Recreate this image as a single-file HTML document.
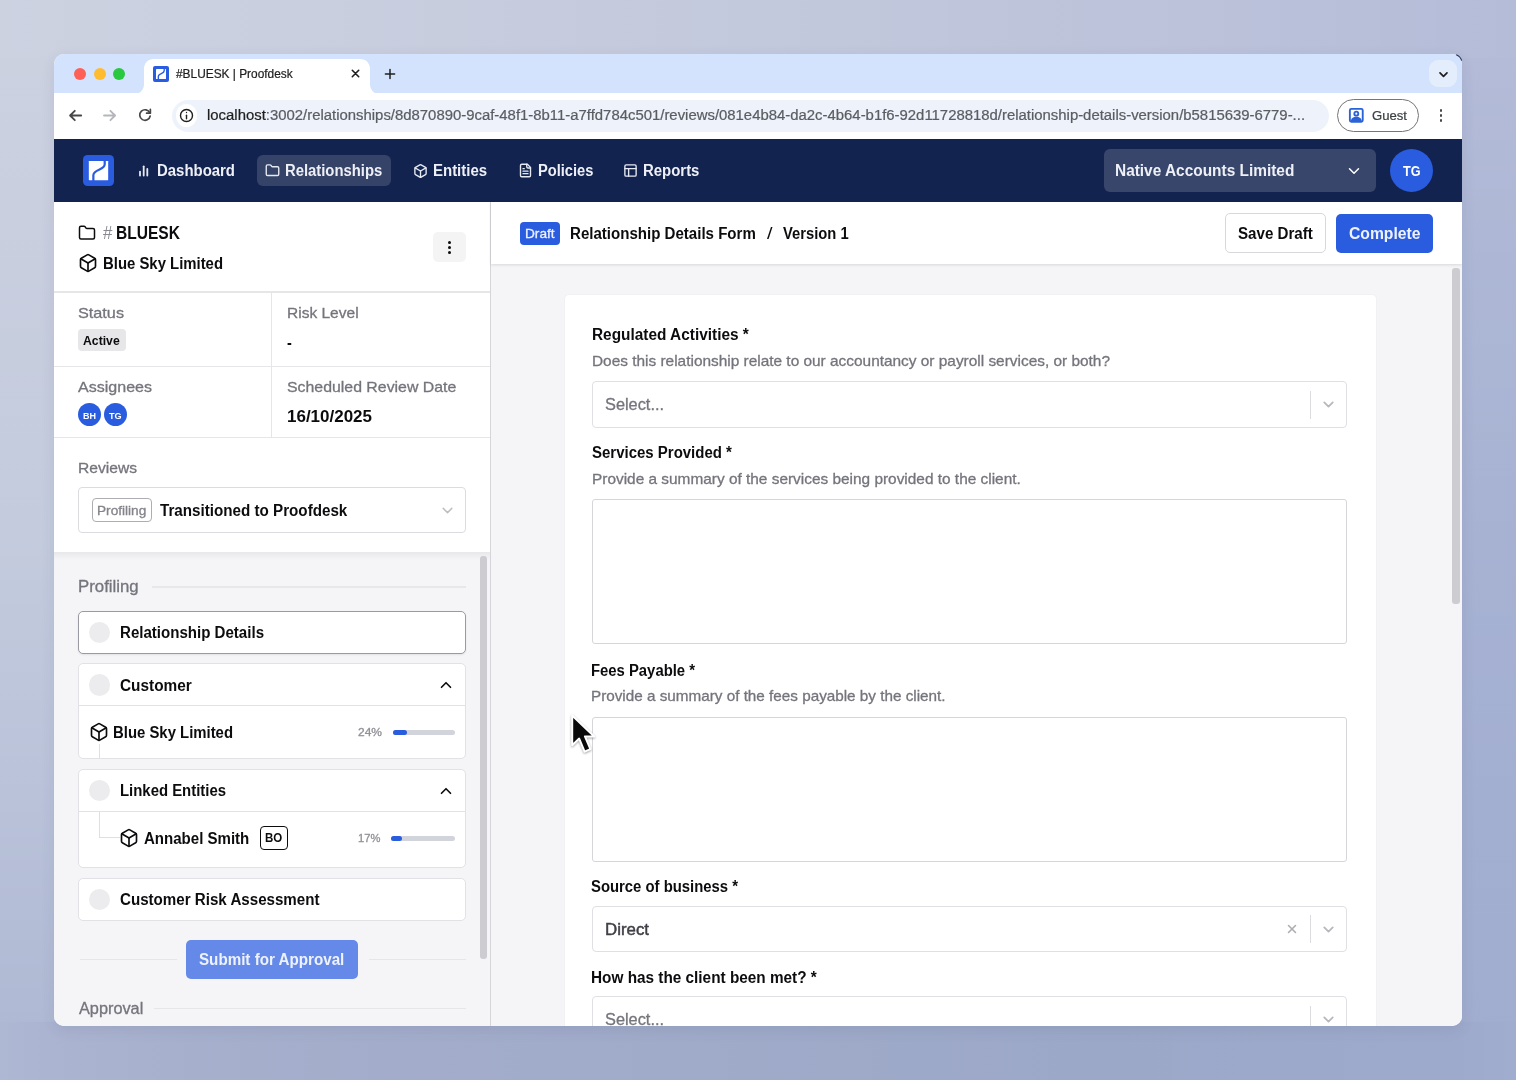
<!DOCTYPE html>
<html><head><meta charset="utf-8"><title>#BLUESK | Proofdesk</title>
<style>
html,body{margin:0;padding:0}
body{width:1516px;height:1080px;overflow:hidden;position:relative;font-family:"Liberation Sans",sans-serif;
background:#b4bcd6;}
.shadow{position:absolute;left:54px;top:54px;width:1408px;height:972px;border-radius:10px;box-shadow:0 4px 14px rgba(50,60,100,.10)}
.win{position:absolute;left:54px;top:54px;width:1408px;height:972px;border-radius:10px;overflow:hidden;background:#fff}
.in{position:absolute;left:-54px;top:-54px;width:1516px;height:1080px;will-change:transform}
.b{position:absolute}
.t{position:absolute;white-space:pre;transform-origin:0 50%;letter-spacing:0}
</style></head><body>
<div class="b" style="left:0;top:0;width:1516px;height:1080px;background:linear-gradient(to bottom right,#ccd2e0 0%,#b6bed8 50%,#a1add0 100%)"></div>
<div class="b" style="left:0;top:0;width:60px;height:1080px;background:linear-gradient(180deg,#ccd2e0 0%,#c8cede 25%,#c3cbdd 50%,#b9c2d9 74%,#b0bad4 93%,#acb6d2 100%)"></div>
<div class="b" style="left:1456px;top:0;width:60px;height:1080px;background:linear-gradient(180deg,#b5bcd8 0%,#adb7d5 25%,#a7b2d3 50%,#a3afd1 74%,#a1adcf 100%)"></div>
<div class="b" style="left:0;top:0;width:1516px;height:58px;background:linear-gradient(90deg,#ccd2e0 0%,#c8cede 25%,#c3c9dc 50%,#bcc3da 75%,#b5bcd8 100%)"></div>
<div class="b" style="left:0;top:1022px;width:1516px;height:58px;background:linear-gradient(90deg,#aeb8d3 0%,#abb4d1 3%,#a6b0cd 13%,#a3adcb 26%,#9faac9 50%,#9ca8c8 73%,#9eaacc 96%,#a1adcf 100%)"></div>
<div class="shadow"></div>
<div class="win"><div class="in">
<div class="b" style="left:54px;top:54px;width:1408px;height:39px;background:#d3e2fd"></div>
<div class="b" style="left:54px;top:93px;width:1408px;height:46px;background:#ffffff"></div>
<svg style="position:absolute;left:134px;top:59px" width="246" height="35" viewBox="0 0 246 35"><path d="M0 35 C6 35 10 31 10 25 V10 C10 4 14 0 20 0 H226 C232 0 236 4 236 10 V25 C236 31 240 35 246 35 Z" fill="#ffffff"/></svg>
<div class="b" style="left:74px;top:68px;width:12px;height:12px;border-radius:50%;background:#fe5f57"></div>
<div class="b" style="left:93.7px;top:68px;width:12.0px;height:12px;border-radius:50%;background:#febc2e"></div>
<div class="b" style="left:113px;top:68px;width:12px;height:12px;border-radius:50%;background:#28c840"></div>
<div class="b" style="left:153px;top:66px;width:16px;height:16px;background:#2a5ce0;border-radius:2px"></div>
<svg style="position:absolute;left:153px;top:66px" width="16" height="16" viewBox="0 0 32 32"><rect x="6" y="6" width="20" height="20" rx="1" fill="#fff"/><path d="M22.4 5 V9.5 C22.4 16 10.7 14.2 10.7 20.8 V27" fill="none" stroke="#2a5ce0" stroke-width="2.8"/></svg>
<svg style="position:absolute;left:349.6px;top:68.2px" width="11" height="11" viewBox="0 0 11 11" fill="none" stroke="#1f1f1f" stroke-width="1.6" stroke-linecap="round" stroke-linejoin="round" ><path d="M2.3 2.3 8.7 8.7M8.7 2.3 2.3 8.7"/></svg>
<svg style="position:absolute;left:384px;top:67.5px" width="12" height="12" viewBox="0 0 12 12" fill="none" stroke="#1f1f1f" stroke-width="1.5" stroke-linecap="round" stroke-linejoin="round" ><path d="M6 1.4V10.6M1.4 6H10.6"/></svg>
<div class="b" style="left:1429px;top:60px;width:28px;height:27px;border-radius:9px;background:#e4edfc"></div>
<svg style="position:absolute;left:1437.5px;top:68.5px" width="11" height="11" viewBox="0 0 11 11" fill="none" stroke="#1f1f1f" stroke-width="1.7" stroke-linecap="round" stroke-linejoin="round" ><path d="M2 3.8 5.5 7.3 9 3.8"/></svg>
<svg style="position:absolute;left:67px;top:107px" width="17" height="17" viewBox="0 0 17 17" fill="none" stroke="#474747" stroke-width="1.8" stroke-linecap="round" stroke-linejoin="round" ><path d="M14.2 8.5H3.2M7.8 3.8 3.1 8.5 7.8 13.2"/></svg>
<svg style="position:absolute;left:101px;top:107px" width="17" height="17" viewBox="0 0 17 17" fill="none" stroke="#b4b6ba" stroke-width="1.8" stroke-linecap="round" stroke-linejoin="round" ><path d="M3 8.5H14M9.4 3.8 14.1 8.5 9.4 13.2"/></svg>
<svg style="position:absolute;left:137.2px;top:107.2px" width="16" height="16" viewBox="0 0 17 17" fill="none" stroke="#474747" stroke-width="1.8" stroke-linecap="round" stroke-linejoin="round" ><path d="M13.6 6.2A5.6 5.6 0 1 0 14 9.6"/><path d="M14.2 2.6V6.6H10.2" /></svg>
<div class="b" style="left:172px;top:99.5px;width:1157px;height:32.19999999999999px;border-radius:16px;background:#eef3fb"></div>
<div class="b" style="left:176px;top:104px;width:21px;height:23px;border-radius:50%;background:#ffffff"></div>
<svg style="position:absolute;left:179px;top:108px" width="15" height="15" viewBox="0 0 15 15" fill="none" stroke="#1f1f1f" stroke-width="1.4" stroke-linecap="round" stroke-linejoin="round" ><circle cx="7.5" cy="7.5" r="6"/><path d="M7.5 7.2V10.8"/><path d="M7.5 4.4V4.6"/></svg>
<div class="b" style="left:1337px;top:98.8px;width:82.40000000000009px;height:32.8px;border-radius:17px;border:1px solid #747775;box-sizing:border-box;background:#fff"></div>
<svg style="position:absolute;left:1348px;top:107.2px" width="16.6" height="16.6" viewBox="0 0 16 16" fill="none" stroke="#2a62d8" stroke-width="1.8" stroke-linecap="round" stroke-linejoin="round" ><rect x="1.8" y="1.8" width="12.4" height="12.4" rx="1.4" fill="none"/><circle cx="8" cy="6.4" r="1.9"/><path d="M3.6 13.2C4.2 11 6 10.3 8 10.3S11.8 11 12.4 13.2Z" fill="#2a62d8"/></svg>
<div class="b" style="left:1439.5px;top:108.85px;width:2.900000000000091px;height:2.9000000000000057px;border-radius:50%;background:#474747"></div>
<div class="b" style="left:1439.5px;top:114.14999999999999px;width:2.900000000000091px;height:2.9000000000000057px;border-radius:50%;background:#474747"></div>
<div class="b" style="left:1439.5px;top:119.45px;width:2.900000000000091px;height:2.9000000000000057px;border-radius:50%;background:#474747"></div>
<div class="b" style="left:54px;top:139px;width:1408px;height:63px;background:#12234f"></div>
<div class="b" style="left:83px;top:154.6px;width:31px;height:31.200000000000017px;background:#2a5ce0;border-radius:4.5px"></div>
<svg style="position:absolute;left:83px;top:154.6px" width="31" height="31.2" viewBox="0 0 32 32"><rect x="6" y="6" width="20" height="20" rx="0.5" fill="#fff"/><path d="M22.4 5 V9.5 C22.4 16 10.7 14.2 10.7 20.8 V27" fill="none" stroke="#2a5ce0" stroke-width="2.3"/></svg>
<div class="b" style="left:257px;top:155px;width:133.5px;height:31px;background:rgba(255,255,255,.15);border-radius:6px"></div>
<div class="b" style="left:1104px;top:149px;width:272px;height:43px;background:rgba(255,255,255,.16);border-radius:6px"></div>
<div class="b" style="left:1390px;top:149px;width:43px;height:43px;background:#2a5ce0;border-radius:50%"></div>
<div class="b" style="left:54px;top:202px;width:436px;height:350px;background:#ffffff"></div>
<div class="b" style="left:54px;top:552px;width:436px;height:474px;background:#f5f5f7"></div>
<div class="b" style="left:54px;top:552px;width:436px;height:8px;background:linear-gradient(#e8e8eb,rgba(245,245,247,0))"></div>
<div class="b" style="left:490px;top:202px;width:1px;height:824px;background:#d6d6da"></div>
<div class="b" style="left:433px;top:232px;width:33px;height:30px;background:#f4f4f5;border-radius:5px"></div>
<div class="b" style="left:447.6px;top:240.60000000000002px;width:3.3999999999999773px;height:3.3999999999999773px;border-radius:50%;background:#0c0c0e"></div>
<div class="b" style="left:447.6px;top:245.8px;width:3.3999999999999773px;height:3.3999999999999773px;border-radius:50%;background:#0c0c0e"></div>
<div class="b" style="left:447.6px;top:251.0px;width:3.3999999999999773px;height:3.3999999999999773px;border-radius:50%;background:#0c0c0e"></div>
<div class="b" style="left:54px;top:291px;width:436px;height:2px;background:#e6e6e9"></div>
<div class="b" style="left:54px;top:365.5px;width:436px;height:1.5px;background:#e6e6e9"></div>
<div class="b" style="left:54px;top:436.7px;width:436px;height:1.5px;background:#e6e6e9"></div>
<div class="b" style="left:270.5px;top:293px;width:1.5px;height:144px;background:#e6e6e9"></div>
<div class="b" style="left:78.3px;top:329px;width:47.7px;height:22px;background:#e7e7e9;border-radius:4px"></div>
<div class="b" style="left:78.2px;top:403.2px;width:23.0px;height:23.0px;background:#2a5ce0;border-radius:50%"></div>
<div class="b" style="left:103.5px;top:403.2px;width:23.0px;height:23.0px;background:#2a5ce0;border-radius:50%"></div>
<div class="b" style="left:78.3px;top:486.7px;width:387.4px;height:46.00000000000006px;background:#fff;border:1px solid #dcdce0;border-radius:4px;box-sizing:border-box"></div>
<div class="b" style="left:91.7px;top:498.3px;width:59.999999999999986px;height:23.400000000000034px;border:1px solid #adadb4;border-radius:4px;box-sizing:border-box"></div>
<div class="b" style="left:480px;top:556px;width:7px;height:403px;background:#cdcdd1;border-radius:3px"></div>
<div class="b" style="left:151.7px;top:586px;width:314.0px;height:1.5px;background:#e7e7ea"></div>
<div class="b" style="left:80px;top:959px;width:96.5px;height:1.2999999999999545px;background:#e6e6e9"></div>
<div class="b" style="left:369px;top:959px;width:97px;height:1.2999999999999545px;background:#e6e6e9"></div>
<div class="b" style="left:154px;top:1008px;width:312px;height:1.2999999999999545px;background:#e6e6e9"></div>
<div class="b" style="left:78.3px;top:611px;width:387.4px;height:43px;background:#fff;border:1px solid #9a9aa2;border-radius:5px;box-sizing:border-box;box-shadow:0 1px 2px rgba(0,0,0,.08)"></div>
<div class="b" style="left:78.3px;top:663.4px;width:387.4px;height:96.0px;background:#fff;border:1px solid #e2e2e6;border-radius:5px;box-sizing:border-box"></div>
<div class="b" style="left:79.3px;top:705px;width:385.4px;height:1px;background:#e2e2e6"></div>
<div class="b" style="left:78.3px;top:769.3px;width:387.4px;height:98.70000000000005px;background:#fff;border:1px solid #e2e2e6;border-radius:5px;box-sizing:border-box"></div>
<div class="b" style="left:79.3px;top:811.3px;width:385.4px;height:1.0px;background:#e2e2e6"></div>
<div class="b" style="left:78.3px;top:878px;width:387.4px;height:42.799999999999955px;background:#fff;border:1px solid #e2e2e6;border-radius:5px;box-sizing:border-box"></div>
<div class="b" style="left:89px;top:621.5999999999999px;width:21.400000000000006px;height:21.40000000000009px;background:#ececee;border-radius:50%"></div>
<div class="b" style="left:89px;top:674.3px;width:21.400000000000006px;height:21.40000000000009px;background:#ececee;border-radius:50%"></div>
<div class="b" style="left:89px;top:780.0px;width:21.400000000000006px;height:21.40000000000009px;background:#ececee;border-radius:50%"></div>
<div class="b" style="left:89px;top:888.8px;width:21.400000000000006px;height:21.40000000000009px;background:#ececee;border-radius:50%"></div>
<div class="b" style="left:98.5px;top:744px;width:1.0px;height:14.399999999999977px;background:#dfdfe3"></div>
<div class="b" style="left:98.5px;top:812.3px;width:1.0px;height:25.700000000000045px;background:#dfdfe3"></div>
<div class="b" style="left:98.5px;top:837px;width:21.0px;height:1px;background:#dfdfe3"></div>
<div class="b" style="left:392.7px;top:729.8px;width:62.30000000000001px;height:5.0px;background:#d2d4dc;border-radius:3px"></div>
<div class="b" style="left:392.7px;top:729.8px;width:14.600000000000023px;height:5.0px;background:#2a5ce0;border-radius:3px"></div>
<div class="b" style="left:390.7px;top:835.8px;width:64.30000000000001px;height:5.0px;background:#d2d4dc;border-radius:3px"></div>
<div class="b" style="left:390.7px;top:835.8px;width:11.0px;height:5.0px;background:#2a5ce0;border-radius:3px"></div>
<div class="b" style="left:260px;top:826.3px;width:27.69999999999999px;height:23.700000000000045px;border:1.3px solid #0c0c0e;border-radius:4px;box-sizing:border-box;background:#fff"></div>
<div class="b" style="left:186.2px;top:940.3px;width:171.5px;height:38.5px;background:#6489e8;border-radius:5px"></div>
<div class="b" style="left:491px;top:202px;width:971px;height:824px;background:#f5f5f7"></div>
<div class="b" style="left:491px;top:202px;width:971px;height:62px;background:#ffffff;box-shadow:0 1px 3px rgba(0,0,0,.12)"></div>
<div class="b" style="left:520.3px;top:222.2px;width:39.700000000000045px;height:22.80000000000001px;background:#2a5ce0;border-radius:4px"></div>
<div class="b" style="left:1225.3px;top:213px;width:100.70000000000005px;height:40.30000000000001px;background:#fff;border:1px solid #d8d8dc;border-radius:5px;box-sizing:border-box"></div>
<div class="b" style="left:1336.3px;top:213.5px;width:96.70000000000005px;height:39.30000000000001px;background:#2a5ce0;border-radius:5px"></div>
<div class="b" style="left:1452px;top:268px;width:7.5px;height:336px;background:#cdcdd1;border-radius:3px"></div>
<div class="b" style="left:565px;top:294.5px;width:811px;height:745.5px;background:#ffffff;border-radius:4px;box-shadow:0 0 2px rgba(0,0,0,.07)"></div>
<div class="b" style="left:591.5px;top:381.2px;width:755.0px;height:46.80000000000001px;background:#fff;border:1px solid #e0e0e4;border-radius:4px;box-sizing:border-box"></div>
<div class="b" style="left:591.5px;top:498.7px;width:755.0px;height:145.59999999999997px;background:#fff;border:1px solid #d6d6da;border-radius:3px;box-sizing:border-box"></div>
<div class="b" style="left:591.5px;top:717px;width:755.0px;height:144.79999999999995px;background:#fff;border:1px solid #d6d6da;border-radius:3px;box-sizing:border-box"></div>
<div class="b" style="left:591.5px;top:906px;width:755.0px;height:46px;background:#fff;border:1px solid #e0e0e4;border-radius:4px;box-sizing:border-box"></div>
<div class="b" style="left:591.5px;top:996px;width:755.0px;height:46px;background:#fff;border:1px solid #e0e0e4;border-radius:4px;box-sizing:border-box"></div>
<div class="b" style="left:1310px;top:390.9px;width:1px;height:28.0px;background:#dcdce0"></div>
<div class="b" style="left:1310px;top:915.3px;width:1px;height:28.0px;background:#dcdce0"></div>
<div class="b" style="left:1310px;top:1005.7px;width:1px;height:28.0px;background:#dcdce0"></div>
<svg style="position:absolute;left:138.2px;top:163.6px" width="11" height="13" viewBox="0 0 11 13" fill="none" stroke="#e6e9f2" stroke-width="1.8" stroke-linecap="round" stroke-linejoin="round" ><path d="M2 11.5V7.7"/><path d="M5.7 11.5V2.3"/><path d="M9.3 11.5V4.9"/></svg>
<svg style="position:absolute;left:265px;top:163px" width="15" height="15" viewBox="0 0 24 24" fill="none" stroke="#e6e9f2" stroke-width="2.2" stroke-linecap="round" stroke-linejoin="round" ><path d="M20 20a2 2 0 0 0 2-2V8a2 2 0 0 0-2-2h-7.9a2 2 0 0 1-1.69-.9L9.6 3.9A2 2 0 0 0 7.93 3H4a2 2 0 0 0-2 2v13a2 2 0 0 0 2 2Z"/></svg>
<svg style="position:absolute;left:413px;top:162.5px" width="15" height="16" viewBox="0 0 24 24" fill="none" stroke="#e6e9f2" stroke-width="2.2" stroke-linecap="round" stroke-linejoin="round" ><path d="M21 8a2 2 0 0 0-1-1.73l-7-4a2 2 0 0 0-2 0l-7 4A2 2 0 0 0 3 8v8a2 2 0 0 0 1 1.73l7 4a2 2 0 0 0 2 0l7-4A2 2 0 0 0 21 16Z"/><path d="m3.3 7 8.7 5 8.7-5"/><path d="M12 22V12"/></svg>
<svg style="position:absolute;left:518px;top:163px" width="15" height="15" viewBox="0 0 24 24" fill="none" stroke="#e6e9f2" stroke-width="2.2" stroke-linecap="round" stroke-linejoin="round" ><path d="M15 2H6a2 2 0 0 0-2 2v16a2 2 0 0 0 2 2h12a2 2 0 0 0 2-2V7Z"/><path d="M14 2v4a2 2 0 0 0 2 2h4"/><path d="M10 9H8"/><path d="M16 13H8"/><path d="M16 17H8"/></svg>
<svg style="position:absolute;left:623px;top:163px" width="15" height="15" viewBox="0 0 24 24" fill="none" stroke="#e6e9f2" stroke-width="2.2" stroke-linecap="round" stroke-linejoin="round" ><rect width="18" height="18" x="3" y="3" rx="2"/><path d="M3 9h18"/><path d="M9 21V9"/></svg>
<svg style="position:absolute;left:1345px;top:162px" width="18" height="18" viewBox="0 0 24 24" fill="none" stroke="#ffffff" stroke-width="2" stroke-linecap="round" stroke-linejoin="round" ><path d="m6 9 6 6 6-6"/></svg>
<svg style="position:absolute;left:78.1px;top:223.9px" width="18" height="18" viewBox="0 0 24 24" fill="none" stroke="#0c0c0e" stroke-width="2" stroke-linecap="round" stroke-linejoin="round" ><path d="M20 20a2 2 0 0 0 2-2V8a2 2 0 0 0-2-2h-7.9a2 2 0 0 1-1.69-.9L9.6 3.9A2 2 0 0 0 7.93 3H4a2 2 0 0 0-2 2v13a2 2 0 0 0 2 2Z"/></svg>
<svg style="position:absolute;left:78px;top:253px" width="20" height="20" viewBox="0 0 24 24" fill="none" stroke="#0c0c0e" stroke-width="2" stroke-linecap="round" stroke-linejoin="round" ><path d="M21 8a2 2 0 0 0-1-1.73l-7-4a2 2 0 0 0-2 0l-7 4A2 2 0 0 0 3 8v8a2 2 0 0 0 1 1.73l7 4a2 2 0 0 0 2 0l7-4A2 2 0 0 0 21 16Z"/><path d="m3.3 7 8.7 5 8.7-5"/><path d="M12 22V12"/></svg>
<svg style="position:absolute;left:438.5px;top:501.5px" width="17" height="17" viewBox="0 0 24 24" fill="none" stroke="#bdbdc3" stroke-width="2" stroke-linecap="round" stroke-linejoin="round" ><path d="m6 9 6 6 6-6"/></svg>
<svg style="position:absolute;left:437px;top:676px" width="18" height="18" viewBox="0 0 24 24" fill="none" stroke="#0c0c0e" stroke-width="2.2" stroke-linecap="round" stroke-linejoin="round" ><path d="m18 15-6-6-6 6"/></svg>
<svg style="position:absolute;left:437px;top:781.7px" width="18" height="18" viewBox="0 0 24 24" fill="none" stroke="#0c0c0e" stroke-width="2.2" stroke-linecap="round" stroke-linejoin="round" ><path d="m18 15-6-6-6 6"/></svg>
<svg style="position:absolute;left:88.5px;top:722px" width="20" height="20" viewBox="0 0 24 24" fill="none" stroke="#0c0c0e" stroke-width="2" stroke-linecap="round" stroke-linejoin="round" ><path d="M21 8a2 2 0 0 0-1-1.73l-7-4a2 2 0 0 0-2 0l-7 4A2 2 0 0 0 3 8v8a2 2 0 0 0 1 1.73l7 4a2 2 0 0 0 2 0l7-4A2 2 0 0 0 21 16Z"/><path d="m3.3 7 8.7 5 8.7-5"/><path d="M12 22V12"/></svg>
<svg style="position:absolute;left:119px;top:828.2px" width="20" height="20" viewBox="0 0 24 24" fill="none" stroke="#0c0c0e" stroke-width="2" stroke-linecap="round" stroke-linejoin="round" ><path d="M21 8a2 2 0 0 0-1-1.73l-7-4a2 2 0 0 0-2 0l-7 4A2 2 0 0 0 3 8v8a2 2 0 0 0 1 1.73l7 4a2 2 0 0 0 2 0l7-4A2 2 0 0 0 21 16Z"/><path d="m3.3 7 8.7 5 8.7-5"/><path d="M12 22V12"/></svg>
<svg style="position:absolute;left:1320px;top:396.4px" width="17" height="17" viewBox="0 0 24 24" fill="none" stroke="#b6b6bc" stroke-width="2.4" stroke-linecap="round" stroke-linejoin="round" ><path d="m6 9 6 6 6-6"/></svg>
<svg style="position:absolute;left:1320px;top:920.8px" width="17" height="17" viewBox="0 0 24 24" fill="none" stroke="#b6b6bc" stroke-width="2.4" stroke-linecap="round" stroke-linejoin="round" ><path d="m6 9 6 6 6-6"/></svg>
<svg style="position:absolute;left:1320px;top:1011.2px" width="17" height="17" viewBox="0 0 24 24" fill="none" stroke="#b6b6bc" stroke-width="2.4" stroke-linecap="round" stroke-linejoin="round" ><path d="m6 9 6 6 6-6"/></svg>
<svg style="position:absolute;left:1285.3px;top:922.3px" width="14" height="14" viewBox="0 0 24 24" fill="none" stroke="#adadb3" stroke-width="2.6" stroke-linecap="round" stroke-linejoin="round" ><path d="M18 6 6 18"/><path d="m6 6 12 12"/></svg>
<div class="t" style="left:176.0px;top:66.70px;font-size:12px;line-height:15.0px;font-weight:400;color:#1f1f1f;-webkit-text-stroke:0.22px;transform:scaleX(0.9903)">#BLUESK | Proofdesk</div>
<div class="t" style="left:207.0px;top:107.45px;font-size:14px;line-height:17.5px;font-weight:400;color:#5a5d62;-webkit-text-stroke:0.22px;transform:scaleX(1.0639)"><span style="color:#1f1f1f">localhost</span>:3002/relationships/8d870890-9caf-48f1-8b11-a7ffd784c501/reviews/081e4b84-da2c-4b64-b1f6-92d11728818d/relationship-details-version/b5815639-6779-...</div>
<div class="t" style="left:1372.0px;top:108.08px;font-size:13px;line-height:16.25px;font-weight:400;color:#3c4043;-webkit-text-stroke:0.22px;transform:scaleX(1.0090)">Guest</div>
<div class="t" style="left:156.5px;top:161.40px;font-size:16px;line-height:20.0px;font-weight:700;color:#eef0f6;transform:scaleX(0.9333)">Dashboard</div>
<div class="t" style="left:284.9px;top:161.40px;font-size:16px;line-height:20.0px;font-weight:700;color:#eef0f6;transform:scaleX(0.9265)">Relationships</div>
<div class="t" style="left:433.4px;top:161.40px;font-size:16px;line-height:20.0px;font-weight:700;color:#eef0f6;transform:scaleX(0.9360)">Entities</div>
<div class="t" style="left:537.9px;top:161.40px;font-size:16px;line-height:20.0px;font-weight:700;color:#eef0f6;transform:scaleX(0.9159)">Policies</div>
<div class="t" style="left:643.4px;top:161.40px;font-size:16px;line-height:20.0px;font-weight:700;color:#eef0f6;transform:scaleX(0.9330)">Reports</div>
<div class="t" style="left:1115.3px;top:161.40px;font-size:16px;line-height:20.0px;font-weight:700;color:#eef0f6;transform:scaleX(0.9634)">Native Accounts Limited</div>
<div class="t" style="left:1403.4px;top:162.95px;font-size:14px;line-height:17.5px;font-weight:700;color:#ffffff;transform:scaleX(0.9047)">TG</div>
<div class="t" style="left:103.3px;top:222.15px;font-size:18px;line-height:22.5px;font-weight:400;color:#8a8a92;transform:scaleX(0.9385)">#</div>
<div class="t" style="left:116.0px;top:222.15px;font-size:18px;line-height:22.5px;font-weight:700;color:#0c0c0e;transform:scaleX(0.8647)">BLUESK</div>
<div class="t" style="left:102.7px;top:254.00px;font-size:16px;line-height:20.0px;font-weight:700;color:#0c0c0e;transform:scaleX(0.9308)">Blue Sky Limited</div>
<div class="t" style="left:78.3px;top:304.02px;font-size:15px;line-height:18.75px;font-weight:400;color:#74747c;-webkit-text-stroke:0.3px;transform:scaleX(1.0816)">Status</div>
<div class="t" style="left:83.3px;top:332.57px;font-size:13px;line-height:16.25px;font-weight:700;color:#0c0c0e;transform:scaleX(0.9403)">Active</div>
<div class="t" style="left:286.7px;top:304.02px;font-size:15px;line-height:18.75px;font-weight:400;color:#74747c;-webkit-text-stroke:0.3px;transform:scaleX(1.0346)">Risk Level</div>
<div class="t" style="left:286.7px;top:333.40px;font-size:16px;line-height:20.0px;font-weight:700;color:#0c0c0e;transform:scaleX(0.9009)">-</div>
<div class="t" style="left:78.3px;top:378.02px;font-size:15px;line-height:18.75px;font-weight:400;color:#74747c;-webkit-text-stroke:0.3px;transform:scaleX(1.0691)">Assignees</div>
<div class="t" style="left:83.3px;top:409.66px;font-size:9.5px;line-height:11.88px;font-weight:700;color:#ffffff;transform:scaleX(0.9465)">BH</div>
<div class="t" style="left:108.6px;top:409.66px;font-size:9.5px;line-height:11.88px;font-weight:700;color:#ffffff;transform:scaleX(0.9619)">TG</div>
<div class="t" style="left:286.7px;top:378.02px;font-size:15px;line-height:18.75px;font-weight:400;color:#74747c;-webkit-text-stroke:0.3px;transform:scaleX(1.0575)">Scheduled Review Date</div>
<div class="t" style="left:286.7px;top:406.70px;font-size:16px;line-height:20.0px;font-weight:700;color:#0c0c0e;transform:scaleX(1.0615)">16/10/2025</div>
<div class="t" style="left:78.3px;top:459.02px;font-size:15px;line-height:18.75px;font-weight:400;color:#74747c;-webkit-text-stroke:0.3px;transform:scaleX(1.0408)">Reviews</div>
<div class="t" style="left:96.7px;top:502.57px;font-size:13px;line-height:16.25px;font-weight:400;color:#83838a;-webkit-text-stroke:0.3px;transform:scaleX(1.0496)">Profiling</div>
<div class="t" style="left:160.0px;top:500.70px;font-size:16px;line-height:20.0px;font-weight:700;color:#0c0c0e;transform:scaleX(0.9490)">Transitioned to Proofdesk</div>
<div class="t" style="left:78.3px;top:577.40px;font-size:16px;line-height:20.0px;font-weight:400;color:#74747c;-webkit-text-stroke:0.3px;transform:scaleX(1.0499)">Profiling</div>
<div class="t" style="left:120.0px;top:623.00px;font-size:16px;line-height:20.0px;font-weight:700;color:#0c0c0e;transform:scaleX(0.9417)">Relationship Details</div>
<div class="t" style="left:120.0px;top:675.70px;font-size:16px;line-height:20.0px;font-weight:700;color:#0c0c0e;transform:scaleX(0.9600)">Customer</div>
<div class="t" style="left:113.3px;top:723.00px;font-size:16px;line-height:20.0px;font-weight:700;color:#0c0c0e;transform:scaleX(0.9308)">Blue Sky Limited</div>
<div class="t" style="left:358.3px;top:726.33px;font-size:11px;line-height:13.75px;font-weight:400;color:#909097;-webkit-text-stroke:0.3px;transform:scaleX(1.0894)">24%</div>
<div class="t" style="left:120.0px;top:781.40px;font-size:16px;line-height:20.0px;font-weight:700;color:#0c0c0e;transform:scaleX(0.9315)">Linked Entities</div>
<div class="t" style="left:144.0px;top:829.00px;font-size:16px;line-height:20.0px;font-weight:700;color:#0c0c0e;transform:scaleX(0.9400)">Annabel Smith</div>
<div class="t" style="left:265.0px;top:831.40px;font-size:12px;line-height:15.0px;font-weight:700;color:#0c0c0e;transform:scaleX(0.9611)">BO</div>
<div class="t" style="left:358.3px;top:832.33px;font-size:11px;line-height:13.75px;font-weight:400;color:#909097;-webkit-text-stroke:0.3px;transform:scaleX(1.0167)">17%</div>
<div class="t" style="left:119.8px;top:890.20px;font-size:16px;line-height:20.0px;font-weight:700;color:#0c0c0e;transform:scaleX(0.9453)">Customer Risk Assessment</div>
<div class="t" style="left:199.3px;top:950.40px;font-size:16px;line-height:20.0px;font-weight:700;color:#eef2fd;transform:scaleX(0.9485)">Submit for Approval</div>
<div class="t" style="left:78.6px;top:999.20px;font-size:16px;line-height:20.0px;font-weight:400;color:#74747c;-webkit-text-stroke:0.3px;transform:scaleX(1.0181)">Approval</div>
<div class="t" style="left:525.3px;top:225.88px;font-size:13px;line-height:16.25px;font-weight:400;color:#edf1fd;-webkit-text-stroke:0.3px;transform:scaleX(1.0507)">Draft</div>
<div class="t" style="left:570.0px;top:224.30px;font-size:16px;line-height:20.0px;font-weight:700;color:#0c0c0e;transform:scaleX(0.9414)">Relationship Details Form</div>
<div class="t" style="left:766.5px;top:224.30px;font-size:16px;line-height:20.0px;font-weight:400;color:#0c0c0e;transform:scaleX(1.2351)">/</div>
<div class="t" style="left:782.7px;top:224.30px;font-size:16px;line-height:20.0px;font-weight:700;color:#0c0c0e;transform:scaleX(0.9219)">Version 1</div>
<div class="t" style="left:1238.3px;top:223.90px;font-size:16px;line-height:20.0px;font-weight:700;color:#0c0c0e;transform:scaleX(0.9450)">Save Draft</div>
<div class="t" style="left:1348.9px;top:223.90px;font-size:16px;line-height:20.0px;font-weight:700;color:#eef2fd;transform:scaleX(0.9807)">Complete</div>
<div class="t" style="left:591.6px;top:325.30px;font-size:16px;line-height:20.0px;font-weight:700;color:#0c0c0e;transform:scaleX(0.9619)">Regulated Activities *</div>
<div class="t" style="left:591.6px;top:352.12px;font-size:15px;line-height:18.75px;font-weight:400;color:#74747c;-webkit-text-stroke:0.3px;transform:scaleX(1.0269)">Does this relationship relate to our accountancy or payroll services, or both?</div>
<div class="t" style="left:605.0px;top:395.20px;font-size:16px;line-height:20.0px;font-weight:400;color:#74747c;-webkit-text-stroke:0.3px;transform:scaleX(1.0205)">Select...</div>
<div class="t" style="left:591.6px;top:443.00px;font-size:16px;line-height:20.0px;font-weight:700;color:#0c0c0e;transform:scaleX(0.9363)">Services Provided *</div>
<div class="t" style="left:591.6px;top:469.93px;font-size:15px;line-height:18.75px;font-weight:400;color:#74747c;-webkit-text-stroke:0.3px;transform:scaleX(1.0265)">Provide a summary of the services being provided to the client.</div>
<div class="t" style="left:591.4px;top:660.60px;font-size:16px;line-height:20.0px;font-weight:700;color:#0c0c0e;transform:scaleX(0.9279)">Fees Payable *</div>
<div class="t" style="left:591.4px;top:687.12px;font-size:15px;line-height:18.75px;font-weight:400;color:#74747c;-webkit-text-stroke:0.3px;transform:scaleX(1.0172)">Provide a summary of the fees payable by the client.</div>
<div class="t" style="left:591.4px;top:877.40px;font-size:16px;line-height:20.0px;font-weight:700;color:#0c0c0e;transform:scaleX(0.9288)">Source of business *</div>
<div class="t" style="left:605.0px;top:920.00px;font-size:16px;line-height:20.0px;font-weight:400;color:#3f3f46;-webkit-text-stroke:0.45px;transform:scaleX(1.0531)">Direct</div>
<div class="t" style="left:591.4px;top:967.70px;font-size:16px;line-height:20.0px;font-weight:700;color:#0c0c0e;transform:scaleX(0.9584)">How has the client been met? *</div>
<div class="t" style="left:605.0px;top:1010.40px;font-size:16px;line-height:20.0px;font-weight:400;color:#74747c;-webkit-text-stroke:0.3px;transform:scaleX(1.0205)">Select...</div>
</div></div>
<svg style="position:absolute;left:1450px;top:52px" width="14" height="14" viewBox="0 0 14 14"><path d="M6.2 2.7 A9 9 0 0 1 11.7 8.6" fill="none" stroke="#27345c" stroke-width="1.1"/></svg>
<svg style="position:absolute;left:568px;top:710.9px;filter:drop-shadow(0.8px 1.6px 1.2px rgba(0,0,0,.35))" width="32" height="48" viewBox="0 0 32 48">
<path d="M4.2 4.5 V34.2 L11.2 27.6 L16.6 40.6 L22.4 38.2 L16.9 25.4 H26.2 Z" fill="#0a0a0a" stroke="#ffffff" stroke-width="2" stroke-linejoin="round"/></svg>
</body></html>
